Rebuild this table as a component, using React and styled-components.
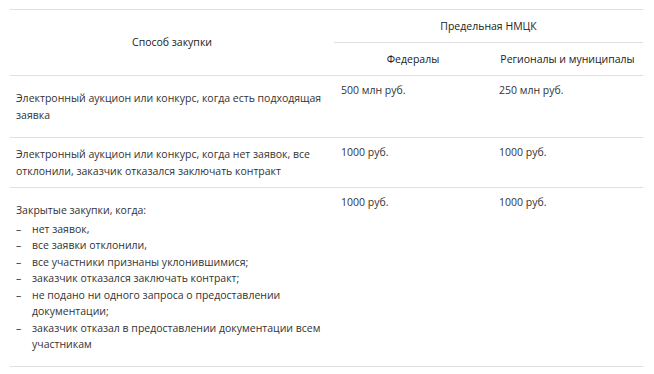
import React from 'react';
import styled, { createGlobalStyle } from 'styled-components';

const GlobalStyle = createGlobalStyle`
  html, body {
    margin: 0;
    padding: 0;
    background: #fff;
  }
  body {
    font-family: 'Open Sans', 'Liberation Sans', sans-serif;
    color: #333;
  }
`;

const Wrapper = styled.div`
  padding: 9px 11px 0 10px;
`;

const Table = styled.table`
  width: 633px;
  border-collapse: collapse;
  table-layout: fixed;
  font-size: 10.5px;
  line-height: 16.4px;
`;

const HeadCell = styled.th`
  height: ${({ h }) => h}px;
  padding: 0 7px;
  font-weight: 500;
  color: #222;
  text-align: center;
  vertical-align: middle;
  border-top: 1px solid #dedee3;
  border-bottom: 1px solid #dedee3;
`;

const Row = styled.tr`
  height: ${({ h }) => h}px;
  border-bottom: 1px solid #dedee3;
`;

const MethodCell = styled.td`
  padding: 0 6px;
  vertical-align: middle;
`;

const ValueCell = styled.td`
  padding: 6px 7px 0;
  vertical-align: top;
`;

const Lead = styled.p`
  margin: 0 0 3px;
`;

const DashList = styled.ul`
  margin: 0;
  padding: 0;
  list-style: none;
`;

const DashItem = styled.li`
  position: relative;
  padding-left: 16px;

  &::before {
    content: '–';
    position: absolute;
    left: 0;
    top: 0;
  }
`;

const rows = [
  {
    h: 62,
    method: 'Электронный аукцион или конкурс, когда есть подходящая заявка',
    fed: '500 млн руб.',
    reg: '250 млн руб.',
  },
  {
    h: 50,
    method:
      'Электронный аукцион или конкурс, когда нет заявок, все отклонили, заказчик отказался заключать контракт',
    fed: '1000 руб.',
    reg: '1000 руб.',
  },
];

const closedReasons = [
  'нет заявок,',
  'все заявки отклонили,',
  'все участники признаны уклонившимися;',
  'заказчик отказался заключать контракт;',
  'не подано ни одного запроса о предоставлении документации;',
  'заказчик отказал в предоставлении документации всем участникам',
];

export default function App() {
  return (
    <>
      <GlobalStyle />
      <Wrapper>
        <Table>
          <colgroup>
            <col style={{ width: 324 }} />
            <col style={{ width: 158 }} />
            <col style={{ width: 151 }} />
          </colgroup>
          <thead>
            <tr>
              <HeadCell rowSpan={2} h={64}>
                Способ закупки
              </HeadCell>
              <HeadCell colSpan={2} h={32}>
                Предельная НМЦК
              </HeadCell>
            </tr>
            <tr>
              <HeadCell h={32}>Федералы</HeadCell>
              <HeadCell h={32}>Регионалы и муниципалы</HeadCell>
            </tr>
          </thead>
          <tbody>
            {rows.map(r => (
              <Row key={r.fed + r.h} h={r.h}>
                <MethodCell>{r.method}</MethodCell>
                <ValueCell>{r.fed}</ValueCell>
                <ValueCell>{r.reg}</ValueCell>
              </Row>
            ))}
            <Row h={179}>
              <MethodCell>
                <Lead>Закрытые закупки, когда:</Lead>
                <DashList>
                  {closedReasons.map(t => (
                    <DashItem key={t}>{t}</DashItem>
                  ))}
                </DashList>
              </MethodCell>
              <ValueCell>1000 руб.</ValueCell>
              <ValueCell>1000 руб.</ValueCell>
            </Row>
          </tbody>
        </Table>
      </Wrapper>
    </>
  );
}
